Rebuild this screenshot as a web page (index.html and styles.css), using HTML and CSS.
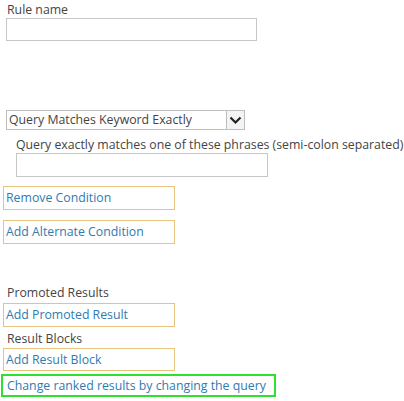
FILE: index.html
```html
<!DOCTYPE html>
<html>
<head>
<meta charset="utf-8">
<link rel="stylesheet" href="styles.css">
</head>
<body>
<div class="page">
  <div class="label rule-label">Rule name</div>
  <div class="input rule-input"></div>

  <div class="select">
    <span class="select-text">Query Matches Keyword Exactly</span>
    <span class="select-btn">
      <svg width="13" height="9" viewBox="0 0 13 9"><path d="M1.5 1.5 L6.5 6.5 L11.5 1.5" fill="none" stroke="#222" stroke-width="2.2"/></svg>
    </span>
  </div>
  <div class="sub">
    <div class="label">Query exactly matches one of these phrases (semi-colon separated)</div>
    <div class="input phrase-input"></div>
  </div>

  <div class="linkbox remove">Remove Condition</div>
  <div class="linkbox alt">Add Alternate Condition</div>

  <div class="label promoted-label">Promoted Results</div>
  <div class="linkbox promoted">Add Promoted Result</div>
  <div class="label blocks-label">Result Blocks</div>
  <div class="linkbox blocks">Add Result Block</div>
  <div class="linkbox green">Change ranked results by changing the query</div>
</div>
</body>
</html>
```

FILE: styles.css
```css
html, body {
  margin: 0;
  padding: 0;
  background: #fff;
}
.page {
  font-family: "Open Sans", "Noto Sans", sans-serif;
  font-size: 12.3px;
  color: #444;
  display: flex;
  flex-direction: column;
  align-items: flex-start;
}
.label {
  line-height: 16px;
  color: #444;
}
.rule-label {
  margin: 2px 0 0 7px;
}
.input {
  border: 1px solid #c6c6c6;
  background: #fff;
  box-sizing: border-box;
}
.rule-input {
  margin-left: 6px;
  width: 251px;
  height: 23px;
}
.select {
  margin: 69px 0 0 6px;
  width: 239px;
  height: 20px;
  box-sizing: border-box;
  border: 1px solid #bdbdbd;
  display: flex;
  align-items: center;
  justify-content: space-between;
}
.select-text {
  padding-left: 2px;
  line-height: 18px;
  color: #444;
}
.select-btn {
  width: 18px;
  height: 18px;
  box-sizing: border-box;
  border-left: 1px solid #bdbdbd;
  background: #f4f4f4;
  display: flex;
  align-items: center;
  justify-content: center;
}
.sub {
  margin: 7px 0 0 16px;
}
.phrase-input {
  width: 252px;
  height: 24px;
}
.linkbox {
  box-sizing: border-box;
  border: 1px solid #e6c37f;
  color: #2f7bb2;
  padding-left: 2px;
  line-height: 22px;
  height: 24px;
  width: 172px;
  margin-left: 3px;
  white-space: nowrap;
}
.remove { margin-top: 9px; }
.alt { margin-top: 10px; }
.promoted-label { margin: 40px 0 0 7px; line-height: 18px; }
.promoted { margin-top: 1px; }
.blocks-label { margin: 3px 0 0 7px; line-height: 18px; }
.blocks { margin-top: 0; height: 23px; }
.green {
  border: 2px solid #2fe02f;
  width: 275px;
  height: 23px;
  line-height: 19px;
  margin: 3px 0 0 1px;
  padding-left: 4px;
}
```
